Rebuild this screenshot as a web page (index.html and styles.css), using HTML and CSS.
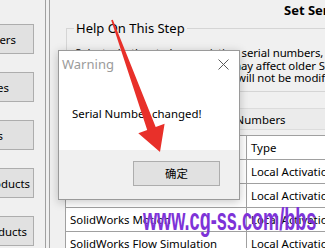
FILE: index.html
```html
<!DOCTYPE html>
<html lang="en">
<head>
  <meta charset="UTF-8">
  <meta name="viewport" content="width=device-width, initial-scale=1.0">
  <title>Set Serial Numbers</title>
  <link rel="stylesheet" href="styles.css">
</head>
<body>
  <div class="app">
    <!-- left step buttons, cut off by the window edge -->
    <aside class="side">
      <div class="side-btn b1"><span>Serial Numbers</span></div>
      <div class="side-btn b2"><span>Licenses</span></div>
      <div class="side-btn b3"><span>Options</span></div>
      <div class="side-btn b4"><span>Select Products</span></div>
      <div class="side-btn b5"><span>Remove Products</span></div>
    </aside>

    <main class="main">
      <div class="title">Set Serial Numbers</div>

      <fieldset class="help">
        <legend>Help On This Step</legend>
        <p>Select whether to keep existing serial numbers, or change them.<br>
        Changing the serial numbers may affect older SolidWorks installs<br>
        on this computer; installations will not be modified.</p>
      </fieldset>

      <section class="numbers">
        <div class="numbers-head">Serial Numbers</div>
        <table class="grid">
          <tr><td class="name">Product</td><td>Type</td></tr>
          <tr><td class="name">SolidWorks</td><td>Local Activation</td></tr>
          <tr><td class="name">Solidworks Simulation</td><td>Local Activation</td></tr>
          <tr><td class="name">SolidWorks Motion</td><td>Local Activation</td></tr>
          <tr><td class="name">SolidWorks Flow Simulation</td><td>Local Activation</td></tr>
        </table>
      </section>
    </main>

    <!-- message box -->
    <div class="dialog">
      <div class="dialog-title">
        <span>Warning</span>
        <svg class="close" width="11" height="11" viewBox="0 0 11 11">
          <path d="M0.5 0.5 L10.5 10.5 M10.5 0.5 L0.5 10.5" stroke="#5a5a5a" stroke-width="1" fill="none"/>
        </svg>
      </div>
      <div class="dialog-body">Serial Number changed!</div>
      <div class="dialog-foot">
        <div class="ok-btn">确定</div>
      </div>
    </div>

    <!-- red pointer arrow drawn over the screenshot -->
    <svg class="arrow" width="325" height="248" viewBox="0 0 325 248">
      <polygon fill="#e8302a" points="111.2,20.3 112.8,19.7 155.7,127 164.6,123.7 160,152 138.3,133.3 147.2,130"/>
    </svg>

    <div class="watermark">www.cg-ss.com/bbs</div>
  </div>
</body>
</html>
```

FILE: styles.css
```css
body {
  margin: 0;
  font-family: "Noto Sans", "Noto Sans CJK SC", sans-serif;
  font-size: 11.4px;
  color: #000;
}

.app {
  position: relative;
  display: flex;
  width: 325px;
  height: 248px;
  overflow: hidden;
  background: #f0f0f0;
}

/* left column */
.side {
  width: 46px;
  flex-shrink: 0;
  border-right: 1px solid #a0a0a0;
  display: flex;
  flex-direction: column;
  gap: 18px;
  padding-top: 24px;
  box-sizing: border-box;
  overflow: hidden;
}

.side-btn {
  width: 34px;
  height: 30px;
  box-sizing: border-box;
  border: 1px solid #adadad;
  border-left: none;
  background: #e1e1e1;
  display: flex;
  justify-content: flex-end;
  align-items: center;
  white-space: nowrap;
  overflow: hidden;
}

.b1 { padding-right: 17px; }
.b2 { padding-right: 24px; }
.b3 { padding-right: 30px; }
.b4 { padding-right: 3px; }
.b5 { padding-right: 6px; }

/* main panel */
.main {
  flex: 1;
  min-width: 0;
  margin-left: 3px;
  border-left: 1px solid #a0a0a0;
  background: #f0f0f0;
  display: flex;
  flex-direction: column;
  white-space: nowrap;
}

.title {
  height: 20px;
  line-height: 20px;
  padding-left: 234px;
  font-weight: bold;
  font-size: 13px;
}

.help {
  margin: 0 -40px 0 16px;
  padding: 0 0 6px 8px;
  border: 1px solid #d5d5d5;
  height: 74px;
  box-sizing: border-box;
}

.help legend {
  font-size: 13px;
  padding: 0 2px;
  margin-left: -1px;
  line-height: 17px;
}

.help p {
  margin: 0;
  padding-top: 10px;
  line-height: 12.5px;
  letter-spacing: -0.1px;
}

.numbers {
  margin: 16px -40px 0 15px;
}

.numbers-head {
  height: 22px;
  line-height: 22px;
  padding-left: 138px;
  border-top: 1px solid #dcdcdc;
  border-bottom: 1px solid #dcdcdc;
  background: #ebebeb;
  box-sizing: border-box;
}

.grid {
  margin-top: 5px;
  border-collapse: collapse;
  background: #fff;
  width: 300px;
}

.grid td {
  height: 24px;
  padding: 0 4px;
  border: 1px solid #a0a0a0;
  box-sizing: border-box;
}

.grid .name {
  width: 181px;
}

/* message box */
.dialog {
  position: absolute;
  left: 58px;
  top: 50px;
  width: 182px;
  height: 150px;
  box-sizing: border-box;
  border: 1px solid #9a9a9a;
  background: #fff;
  box-shadow: 0 2px 9px rgba(0, 0, 0, 0.22);
  display: flex;
  flex-direction: column;
}

.dialog-title {
  height: 26px;
  display: flex;
  justify-content: space-between;
  align-items: center;
  padding: 0 10px 0 3px;
  color: #9b9b9b;
  font-size: 13px;
}

.dialog-body {
  flex: 1;
  display: flex;
  align-items: center;
  padding-left: 13px;
}

.dialog-foot {
  height: 49px;
  background: #f0f0f0;
  padding: 11px 0 0 74px;
  box-sizing: border-box;
}

.ok-btn {
  width: 87px;
  height: 25px;
  box-sizing: border-box;
  border: 1px solid #adadad;
  background: #e1e1e1;
  text-align: center;
  line-height: 23px;
}

.arrow {
  position: absolute;
  left: 0;
  top: 0;
}

.watermark {
  position: absolute;
  left: 143px;
  top: 201px;
  font-family: "Liberation Sans", sans-serif;
  font-weight: bold;
  font-size: 32px;
  color: #7d33d8;
  transform: scaleX(0.566);
  transform-origin: left top;
  white-space: nowrap;
}
```
